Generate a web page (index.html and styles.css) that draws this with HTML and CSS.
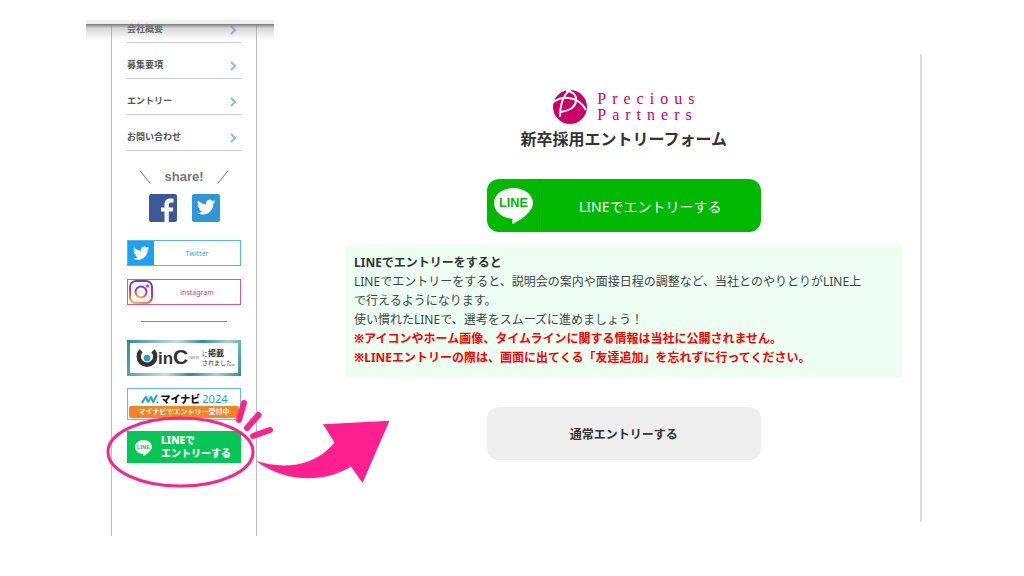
FILE: index.html
```html
<!DOCTYPE html>
<html lang="ja">
<head>
  <meta charset="UTF-8">
  <title>新卒採用エントリーフォーム</title>
  <meta name="viewport" content="width=device-width, initial-scale=1.0">
  <link rel="stylesheet" href="styles.css">
</head>
<body>
  <div class="page">
    <div class="menu-shell">
      <div class="menu-top"></div>
      <aside class="menu">
        <nav class="menu-nav">
          <a href="#">会社概要<svg class="arrow" viewBox="0 0 6 10"><path d="M1 1l4 4-4 4"/></svg></a>
          <a href="#">募集要項<svg class="arrow" viewBox="0 0 6 10"><path d="M1 1l4 4-4 4"/></svg></a>
          <a href="#">エントリー<svg class="arrow" viewBox="0 0 6 10"><path d="M1 1l4 4-4 4"/></svg></a>
          <a href="#">お問い合わせ<svg class="arrow" viewBox="0 0 6 10"><path d="M1 1l4 4-4 4"/></svg></a>
        </nav>

        <div class="share">
          <div class="share-title">
            <svg viewBox="0 0 10 12"><path d="M0 0l10 12"/></svg>
            <span>share!</span>
            <svg viewBox="0 0 10 12"><path d="M10 0L0 12"/></svg>
          </div>
          <div class="share-icons">
            <a href="#" aria-label="Facebook">
              <svg viewBox="0 0 28 28">
                <rect width="28" height="28" rx="2" fill="#3b5998"/>
                <path d="M15.500 28V17.500H12v-4h3.500v-3C15.500 6.500 17.800 4.500 21.500 4.500H24.500v4h-2.200c-2 0-2.500.8-2.500 2.300v2.700h4.500l-.6 4h-3.900V28z" fill="#fff"/>
              </svg>
            </a>
            <a href="#" aria-label="Twitter">
              <svg viewBox="0 0 28 28">
                <rect width="28" height="28" rx="2" fill="#2f96d8"/>
                <path transform="translate(5 4) scale(.76)" d="M23.950 4.570a10 10 0 0 1-2.820.770 4.960 4.960 0 0 0 2.160-2.720c-.950.560-2 .960-3.130 1.180a4.920 4.920 0 0 0-8.380 4.480C7.690 8.090 4.070 6.130 1.640 3.160a4.920 4.920 0 0 0 1.520 6.570 4.900 4.900 0 0 1-2.230-.610v.060a4.920 4.920 0 0 0 3.950 4.830 5 5 0 0 1-2.210.080 4.940 4.940 0 0 0 4.600 3.420A9.870 9.870 0 0 1 0 19.540a13.990 13.990 0 0 0 7.550 2.210c9.050 0 14-7.500 14-13.980l-.020-.640a9.940 9.940 0 0 0 2.420-2.560z" fill="#fff"/>
              </svg>
            </a>
          </div>
        </div>

        <a href="#" class="sns sns-tw">
          <svg viewBox="0 0 26 24">
            <rect width="26" height="24" fill="#1da1f2"/>
            <path transform="translate(5 4) scale(.68)" d="M23.950 4.570a10 10 0 0 1-2.820.770 4.960 4.960 0 0 0 2.160-2.720c-.950.560-2 .960-3.130 1.180a4.920 4.920 0 0 0-8.380 4.480C7.690 8.090 4.070 6.130 1.640 3.160a4.920 4.920 0 0 0 1.520 6.570 4.900 4.900 0 0 1-2.230-.610v.060a4.920 4.920 0 0 0 3.950 4.830 5 5 0 0 1-2.210.080 4.940 4.940 0 0 0 4.600 3.420A9.870 9.870 0 0 1 0 19.540a13.990 13.990 0 0 0 7.550 2.210c9.050 0 14-7.500 14-13.980l-.020-.640a9.940 9.940 0 0 0 2.420-2.560z" fill="#fff"/>
          </svg>
          <span>Twitter</span>
        </a>
        <a href="#" class="sns sns-ig">
          <svg viewBox="0 0 26 24">
            <defs>
              <linearGradient id="ig" x1=".2" y1="1" x2=".5" y2="0">
                <stop offset="0" stop-color="#fdb548"/>
                <stop offset=".3" stop-color="#f0523f"/>
                <stop offset=".6" stop-color="#c92e86"/>
                <stop offset="1" stop-color="#6a42c4"/>
              </linearGradient>
            </defs>
            <g fill="none" stroke="url(#ig)" stroke-width="2">
              <rect x="2" y="1" width="22" height="22" rx="6"/>
              <circle cx="13" cy="12" r="5.500"/>
            </g>
            <circle cx="19.500" cy="6" r="1.500" fill="#b8329a"/>
          </svg>
          <span>instagram</span>
        </a>

        <hr class="menu-line">

        <a href="#" class="bnr bnr-winc">
          <svg viewBox="0 0 20 20">
            <path d="M4.500 3.500A7.500 7.500 0 1 0 15.500 3.500" fill="none" stroke="#333" stroke-width="4"/>
            <circle cx="10" cy="10" r="3" fill="#22a5c4"/>
          </svg>
          <span class="winc-name">in<b>C</b></span>
          <span class="winc-sub">CAREER</span>
          <span class="winc-text">に<b>掲載</b><br>されました。</span>
        </a>

        <a href="#" class="bnr bnr-mynavi">
          <span class="mynavi-name">
            <svg viewBox="0 0 18 10"><path d="M1 9C3 6 4 3 5 3s1 5 2 5 2-5 3-5 1 5 2 5 2-4 4-7" fill="none" stroke="#12a5e0" stroke-width="2"/><circle cx="16.500" cy="8.500" r="1" fill="#12a5e0"/></svg>
            <b>マイナビ</b><i>2024</i>
          </span>
          <span class="mynavi-entry">マイナビでエントリー受付中</span>
        </a>

        <div class="line-bnr-wrap">
          <a href="#" class="bnr bnr-line">
            <svg viewBox="0 0 20 20">
              <path d="M10 2c5 0 9 3.200 9 7.200 0 3.800-4.500 7-8.500 9.800-.8.400-.8-.4-.6-2C5 17 1 13.500 1 9.200 1 5.200 5 2 10 2z" fill="#fff"/>
              <text x="10" y="12" text-anchor="middle" class="line-mark-s">LINE</text>
            </svg>
            <span>LINEで<br>エントリーする</span>
          </a>
          <!-- ピンクの丸囲みと矢印 -->
          <svg class="guide" viewBox="100 395 300 100">
            <ellipse cx="180.500" cy="452" rx="72.500" ry="34" fill="none" stroke="#ff1f8f" stroke-width="3"/>
            <path d="M244 403l-5 17M258.500 415L247 428M270 430l-17 6" stroke="#ff1f8f" stroke-width="6" stroke-linecap="round"/>
            <path d="M256 461C282 469 314 468 334.500 442.500L323 424.300 389.500 420.700 362.500 483 351 466.500C326 482 287 484 256 461z" fill="#ff1f8f"/>
          </svg>
        </div>
      </aside>
    </div>

    <main class="entry">
      <div class="logo">
        <svg viewBox="0 0 34 34">
          <circle cx="17" cy="17" r="17" fill="#cc0066"/>
          <g fill="none" stroke="#fff" stroke-width="2">
            <path d="M-1 13C4 9 10 7 16 8c8 1 13 5 17 12"/>
            <path d="M18 -1C11 4 7 13 7 27"/>
            <path d="M13 1c6 0 11 4 10 10-1 6-5 9-15 11"/>
          </g>
        </svg>
        <p>Precious<br>Partners</p>
      </div>
      <h1>新卒採用エントリーフォーム</h1>

      <button type="button" class="btn btn-line">
        <span class="btn-icon">
          <svg viewBox="0 0 40 40">
            <path d="M20 2c11 0 20 6.500 20 15.500C40 25 32 32 20.500 38.500c-2 1-2-.5-1.500-5C8 33 0 26.500 0 17.500 0 8.500 9 2 20 2z" fill="#fff"/>
            <text x="20" y="22" text-anchor="middle" class="line-mark">LINE</text>
          </svg>
        </span>
        <span class="btn-text">LINEでエントリーする</span>
      </button>

      <div class="about">
        <h2>LINEでエントリーをすると</h2>
        <p>LINEでエントリーをすると、説明会の案内や面接日程の調整など、当社とのやりとりがLINE上<br>で行えるようになります。</p>
        <p>使い慣れたLINEで、選考をスムーズに進めましょう！</p>
        <p class="caution">※アイコンやホーム画像、タイムラインに関する情報は当社に公開されません。</p>
        <p class="caution">※LINEエントリーの際は、画面に出てくる「友達追加」を忘れずに行ってください。</p>
      </div>

      <button type="button" class="btn btn-normal">通常エントリーする</button>
    </main>
  </div>
</body>
</html>
```

FILE: styles.css
```css
* { box-sizing: border-box; }
body {
  margin: 0;
  background: #fff;
  color: #333;
  font-family: "Noto Sans", "Noto Sans CJK JP", sans-serif;
}
h1, h2, p { margin: 0; }
a { color: inherit; text-decoration: none; }
svg { display: block; flex: none; }
.page {
  display: grid;
  grid-template-columns: 188px minmax(0, 1fr);
  column-gap: 72px;
  padding: 20px 10% 0 86px;
}

/* 左メニュー */
.menu-shell { position: relative; }
.menu-top { height: 4px; background: #f0f0f0; }
.menu-top::after {
  content: "";
  position: absolute; left: 0; right: 0; top: 4px; height: 16px;
  background: linear-gradient(#777, rgba(150,150,150,.4) 25%, rgba(200,200,200,0));
  z-index: 1;
}
.menu {
  margin: 0 17px 0 25px;
  padding: 0 15px 73px;
  border-left: 1px solid #bbb;
  border-right: 1px solid #bbb;
}
.menu-nav a {
  display: flex; justify-content: space-between; align-items: flex-end;
  height: 36px;
  padding: 0 5px 7px 0;
  border-bottom: 1px solid #ccc;
  font-size: 9px; font-weight: bold; line-height: 12px;
  color: #555;
}
.menu-nav a:first-child { height: 19px; }
.arrow { width: 6px; height: 10px; fill: none; stroke: #85bde3; stroke-width: 2; }

.share { padding-top: 18px; color: #777; }
.share-title { display: flex; justify-content: center; align-items: center; gap: 14px; }
.share-title span { font: bold 13px/16px "Liberation Sans", sans-serif; }
.share-title svg { width: 10px; height: 12px; stroke: #777; }
.share-icons { display: flex; justify-content: center; gap: 15px; margin: 9px 0 18px; }
.share-icons svg { width: 28px; height: 28px; }

.sns {
  display: flex; align-items: center;
  height: 26px;
  margin-bottom: 13px;
  border: 1px solid;
  font-size: 7px;
}
.sns svg { width: 26px; height: 24px; }
.sns span { flex: 1; text-align: center; }
.sns-tw { color: #3f9be8; border-color: #55b4f2; }
.sns-ig { color: #d6397f; border-color: #e0559a; }
.menu-line { width: 86px; margin: 16px auto 18px; border: 0; border-top: 1px solid #888; }

/* バナー */
.bnr { display: flex; align-items: center; }
.bnr-winc {
  height: 36px;
  margin-bottom: 12px;
  padding-left: 6px;
  border: 3px solid;
  border-image: linear-gradient(110deg, #2b8c9e, #c5dfe4 40%, #2b8c9e 60%, #a9d1d9 80%, #2b8c9e) 3;
}
.bnr-winc svg { width: 22px; height: 22px; }
.winc-name { font: bold 17px/24px "Liberation Sans", sans-serif; }
.winc-name b { font-size: 21px; }
.winc-sub { font-size: 3px; line-height: 4px; color: #888; }
.winc-text { margin-left: auto; font-size: 6px; line-height: 9px; white-space: nowrap; }
.winc-text b { font-size: 8px; }
.bnr-mynavi {
  flex-direction: column; justify-content: space-between;
  height: 32px;
  margin-bottom: 11px;
  padding: 4px 1px 1px;
  border: 1px solid #5fbdeb;
}
.mynavi-name { display: flex; align-items: center; gap: 2px; font-size: 11px; line-height: 12px; color: #111; }
.mynavi-name svg { width: 18px; height: 10px; }
.mynavi-name b { font-size: 10px; font-weight: 900; }
.mynavi-name i { font-style: normal; color: #12a5e0; }
.mynavi-entry {
  width: 100%;
  border-radius: 2px;
  background: #f58426;
  color: #fff;
  font-size: 7px; font-weight: bold; line-height: 12px;
  text-align: center;
}
.line-bnr-wrap { position: relative; }
.bnr-line {
  gap: 8px;
  height: 32px;
  padding-left: 7px;
  background: #06c755;
  color: #fff;
  font-size: 10px; font-weight: 900; line-height: 13px;
  white-space: nowrap;
}
.bnr-line svg { width: 19px; height: 19px; }
.line-mark-s { font: bold 6px "Liberation Sans", sans-serif; fill: #06c755; }
.guide { position: absolute; left: -27px; top: -36px; width: 300px; height: 100px; z-index: 2; pointer-events: none; }

/* エントリー */
.entry {
  display: flex; flex-direction: column; align-items: center;
  margin: 34px 0 54px;
  padding: 36px 18px 62px 0;
  border-right: 2px solid #dcdee2;
}
.logo { display: flex; align-items: center; gap: 10px; color: #cc0066; }
.logo svg { width: 34px; height: 34px; }
.logo p { font: 16px/16px "Liberation Serif", serif; letter-spacing: 6px; margin-right: -6px; }
h1 { margin: 3px 0 28px; font-size: 16px; line-height: 24px; }
.btn {
  display: flex; align-items: center; justify-content: center;
  width: 274px; max-width: 100%; height: 53px;
  padding: 0;
  border: none;
  border-radius: 12px;
  font-family: inherit;
  cursor: pointer;
}
.btn-line { background: #00b900; color: #fff; font-size: 14px; }
.btn-icon { display: flex; align-items: center; height: 100%; padding: 0 6px 0 7px; border-right: 1px solid #00a300; }
.btn-icon svg { width: 39px; height: 39px; }
.line-mark { font: bold 13px "Liberation Sans", sans-serif; fill: #00b900; }
.btn-text { flex: 1; text-align: center; }
.btn-normal { background: #eee; color: #333; font-size: 12px; font-weight: bold; }
.about {
  width: 100%;
  margin: 13px 0 30px;
  padding: 8px 8px 10px;
  background: #edfff2;
  font-size: 12px; line-height: 19px;
  color: #444;
}
.about h2 { font-size: 12px; line-height: 19px; color: #333; }
.about .caution { color: #f00; font-weight: bold; }
```
